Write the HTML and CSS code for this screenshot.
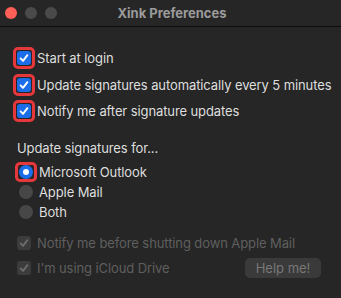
FILE: index.html
```html
<!DOCTYPE html>
<html lang="en">
<head>
  <meta charset="UTF-8" />
  <meta name="viewport" content="width=device-width, initial-scale=1.0" />
  <title>Xink Preferences</title>
  <link rel="stylesheet" href="styles.css">
</head>
<body>
  <div class="xink-window">
    <!-- Title bar -->
    <div class="xink-titlebar">
      <div class="xink-lights">
        <span class="xink-light xink-light-close"></span>
        <span class="xink-light"></span>
        <span class="xink-light"></span>
      </div>
      <div class="xink-title">Xink Preferences</div>
    </div>

    <div class="xink-content">
      <!-- General options -->
      <div class="xink-options">
        <div class="xink-row">
          <span class="xink-mark">
            <span class="xink-check">
              <svg viewBox="0 0 14 14"><path d="M3.6 7.4 L6 9.8 L10.4 4.2" /></svg>
            </span>
          </span>
          <span class="xink-label">Start at login</span>
        </div>
        <div class="xink-row">
          <span class="xink-mark">
            <span class="xink-check">
              <svg viewBox="0 0 14 14"><path d="M3.6 7.4 L6 9.8 L10.4 4.2" /></svg>
            </span>
          </span>
          <span class="xink-label">Update signatures automatically every 5 minutes</span>
        </div>
        <div class="xink-row">
          <span class="xink-mark">
            <span class="xink-check">
              <svg viewBox="0 0 14 14"><path d="M3.6 7.4 L6 9.8 L10.4 4.2" /></svg>
            </span>
          </span>
          <span class="xink-label">Notify me after signature updates</span>
        </div>
      </div>

      <!-- Mail client -->
      <div class="xink-heading">Update signatures for...</div>
      <div class="xink-radios">
        <div class="xink-radio-row">
          <span class="xink-mark xink-mark-radio">
            <span class="xink-radio xink-radio-on"></span>
          </span>
          <span class="xink-label">Microsoft Outlook</span>
        </div>
        <div class="xink-radio-row">
          <span class="xink-slot"><span class="xink-radio"></span></span>
          <span class="xink-label">Apple Mail</span>
        </div>
        <div class="xink-radio-row">
          <span class="xink-slot"><span class="xink-radio"></span></span>
          <span class="xink-label">Both</span>
        </div>
      </div>

      <!-- Disabled options -->
      <div class="xink-disabled">
        <div class="xink-row xink-row-off">
          <span class="xink-slot">
            <span class="xink-check xink-check-off">
              <svg viewBox="0 0 14 14"><path d="M3.6 7.4 L6 9.8 L10.4 4.2" /></svg>
            </span>
          </span>
          <span class="xink-label">Notify me before shutting down Apple Mail</span>
        </div>
        <div class="xink-row xink-row-off">
          <span class="xink-slot">
            <span class="xink-check xink-check-off">
              <svg viewBox="0 0 14 14"><path d="M3.6 7.4 L6 9.8 L10.4 4.2" /></svg>
            </span>
          </span>
          <span class="xink-label">I'm using iCloud Drive</span>
          <button class="xink-help" disabled>Help me!</button>
        </div>
      </div>
    </div>
  </div>
</body>
</html>
```

FILE: styles.css
```css
/* Base Styles */
body {
  margin: 0;
  padding: 0;
  background: #262626;
  font-family: "Inter", "Liberation Sans", Arial, sans-serif;
  font-size: 13px;
  letter-spacing: -0.1px;
  color: #dedede;
}

.xink-window {
  width: 341px;
  height: 298px;
  overflow: hidden;
}

/* Title bar */
.xink-titlebar {
  height: 26px;
  border-bottom: 1px solid #0c0c0c;
  display: flex;
  align-items: center;
  position: relative;
}

.xink-lights {
  display: flex;
  gap: 8px;
  padding-left: 5px;
}

.xink-light {
  width: 12px;
  height: 12px;
  border-radius: 50%;
  background: #4a4a4a;
}

.xink-light-close {
  background: #fe5f57;
}

.xink-title {
  position: absolute;
  left: 0;
  right: 0;
  padding-left: 3px;
  text-align: center;
  font-weight: bold;
  color: #9b9b9b;
  font-size: 13px;
  letter-spacing: 0;
}

/* Content */
.xink-content {
  padding-top: 18px;
}

.xink-row {
  display: flex;
  align-items: center;
  height: 26.5px;
  padding-left: 13px;
}

.xink-mark {
  width: 16px;
  height: 16px;
  border: 3px solid #e4383d;
  border-radius: 5px;
  display: flex;
  align-items: center;
  justify-content: center;
  flex-shrink: 0;
}

.xink-slot {
  width: 22px;
  height: 22px;
  display: flex;
  align-items: center;
  justify-content: center;
  flex-shrink: 0;
}

.xink-label {
  margin-left: 2px;
  white-space: nowrap;
}

.xink-check {
  width: 14px;
  height: 14px;
  border-radius: 3px;
  background: #1c6ee8;
  display: flex;
}

.xink-check svg {
  width: 14px;
  height: 14px;
  fill: none;
  stroke: #ffffff;
  stroke-width: 1.9;
  stroke-linecap: round;
  stroke-linejoin: round;
}

/* Radios */
.xink-heading {
  padding-left: 17px;
  margin-top: 13.5px;
  height: 20px;
  line-height: 20px;
}

.xink-radios {
  margin-top: 4px;
}

.xink-radio-row {
  display: flex;
  align-items: center;
  height: 20px;
  padding-left: 15px;
}

.xink-mark-radio {
  width: 16px;
  height: 14px;
}

.xink-radio {
  width: 14px;
  height: 14px;
  border-radius: 50%;
  background: #474747;
  display: flex;
  align-items: center;
  justify-content: center;
}

.xink-radio-on {
  background: #1c6ee8;
}

.xink-radio-on::after {
  content: "";
  width: 6px;
  height: 6px;
  border-radius: 50%;
  background: #ffffff;
}

/* Disabled options */
.xink-disabled {
  margin-top: 8px;
}

.xink-row-off {
  height: 25px;
  color: #5f5f5f;
  padding-right: 20px;
}

.xink-check-off {
  background: #3c3c3c;
}

.xink-check-off svg {
  stroke: #6c6c6c;
}

.xink-help {
  margin-left: auto;
  width: 76px;
  height: 20px;
  border: none;
  border-radius: 5px;
  background: #3a3a3a;
  color: #787878;
  font-family: inherit;
  font-size: 13px;
  padding: 0;
}
```
